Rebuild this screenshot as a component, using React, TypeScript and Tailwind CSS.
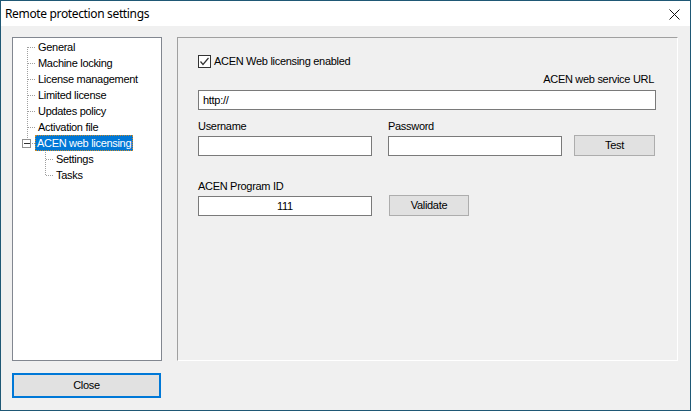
import React from 'react'

const FONT = { fontFamily: '"Liberation Sans", Arial, sans-serif' }

const topItems = [
  'General',
  'Machine locking',
  'License management',
  'Limited license',
  'Updates policy',
  'Activation file',
]

function TreeLines() {
  const rows = [9, 25, 41, 57, 73, 89]
  return (
    <svg className="absolute left-0 top-0" width="60" height="150" shapeRendering="crispEdges">
      <line x1="14.5" y1="9" x2="14.5" y2="101" stroke="#a0a0a0" strokeDasharray="1 1" />
      {rows.map(y => (
        <line key={y} x1="15" y1={y + 0.5} x2="23" y2={y + 0.5} stroke="#a0a0a0" strokeDasharray="1 1" />
      ))}
      <rect x="9.5" y="101.5" width="8" height="8" fill="#fff" stroke="#919191" />
      <line x1="11" y1="105.5" x2="17" y2="105.5" stroke="#333" />
      <line x1="19" y1="105.5" x2="23" y2="105.5" stroke="#a0a0a0" strokeDasharray="1 1" />
      <line x1="32.5" y1="114" x2="32.5" y2="137" stroke="#a0a0a0" strokeDasharray="1 1" />
      <line x1="33" y1="121.5" x2="41" y2="121.5" stroke="#a0a0a0" strokeDasharray="1 1" />
      <line x1="33" y1="137.5" x2="41" y2="137.5" stroke="#a0a0a0" strokeDasharray="1 1" />
    </svg>
  )
}

function TextBox({ value, className, center }: { value?: string; className: string; center?: boolean }) {
  return (
    <div className={`h-[20px] bg-white border border-[#7a7a7a] flex items-center px-[4px] text-[11px] ${center ? 'justify-center' : ''} ${className}`}>
      {value}
    </div>
  )
}

function Button({ label, className }: { label: string; className: string }) {
  return (
    <button className={`h-[21px] bg-[#e1e1e1] border border-[#adadad] text-[11px] text-black flex items-center justify-center ${className}`}>
      {label}
    </button>
  )
}

export default function App() {
  return (
    <div className="w-[691px] h-[411px] border border-[#1f5875] bg-[#f0f0f0] flex flex-col text-black overflow-hidden tracking-[-0.3px]" style={FONT}>
      <div className="h-[25px] bg-white flex items-center justify-between pl-[4px] pr-[10px] shrink-0">
        <span className="text-[12px] tracking-[-0.35px]" style={{ fontFamily: '"Noto Sans", "Liberation Sans", sans-serif' }}>Remote protection settings</span>
        <svg width="11" height="11" viewBox="0 0 11 11" className="mt-[1px]">
          <path d="M0.5 0.5 L10.5 10.5 M10.5 0.5 L0.5 10.5" stroke="#111" strokeWidth="1" />
        </svg>
      </div>

      <div className="flex flex-col pl-[11px] pt-[11px]">
        <div className="flex gap-[15px]">
          <div className="relative w-[150px] h-[324px] bg-white border border-[#828790] pt-[1px] text-[11px]">
            <TreeLines />
            {topItems.map(t => (
              <div key={t} className="h-[16px] flex items-center pl-[23px]">
                <span className="px-[1px] leading-[14px] border border-transparent">{t}</span>
              </div>
            ))}
            <div className="h-[16px] flex items-center pl-[22px]">
              <span className="px-[1px] leading-[14px] bg-[#0078d7] text-white border border-dotted border-[#c88a2a]">ACEN web licensing</span>
            </div>
            {['Settings', 'Tasks'].map(t => (
              <div key={t} className="h-[16px] flex items-center pl-[41px]">
                <span className="px-[1px] leading-[14px] border border-transparent">{t}</span>
              </div>
            ))}
          </div>

          <div className="w-[501px] h-[324px] border-t border-l border-[#a0a0a0] border-r-white border-b-white border-r border-b pl-[20px] pr-[21px] pt-[17px] flex flex-col text-[11px]">
            <div className="h-[13px] flex items-center gap-[3px]">
              <span className="w-[13px] h-[13px] border border-[#333] bg-white flex items-center justify-center">
                <svg width="11" height="11" viewBox="0 0 11 11">
                  <path d="M1.5 5.5 L4 8.5 L9.5 2" fill="none" stroke="#333" strokeWidth="1.2" />
                </svg>
              </span>
              <span>ACEN Web licensing enabled</span>
            </div>
            <div className="h-[13px] mt-[5px] flex items-center justify-end pr-[2px]">ACEN web service URL</div>
            <TextBox value="http://" className="mt-[4px] w-[458px]" />
            <div className="h-[13px] mt-[10px] flex items-center">
              <span className="w-[190px]">Username</span>
              <span>Password</span>
            </div>
            <div className="mt-[2px] flex items-end">
              <TextBox className="w-[174px]" />
              <TextBox className="w-[174px] ml-[16px]" />
              <Button label="Test" className="w-[81px] ml-[12px]" />
            </div>
            <div className="h-[13px] mt-[24px] flex items-center">ACEN Program ID</div>
            <div className="mt-[2px] flex items-end">
              <TextBox value="111" center className="w-[174px]" />
              <Button label="Validate" className="w-[80px] ml-[17px]" />
            </div>
          </div>
        </div>

        <button className="mt-[12px] w-[149px] h-[25px] bg-[#e1e1e1] border-2 border-[#0078d7] text-[11px] text-black flex items-center justify-center">
          Close
        </button>
      </div>
    </div>
  )
}
